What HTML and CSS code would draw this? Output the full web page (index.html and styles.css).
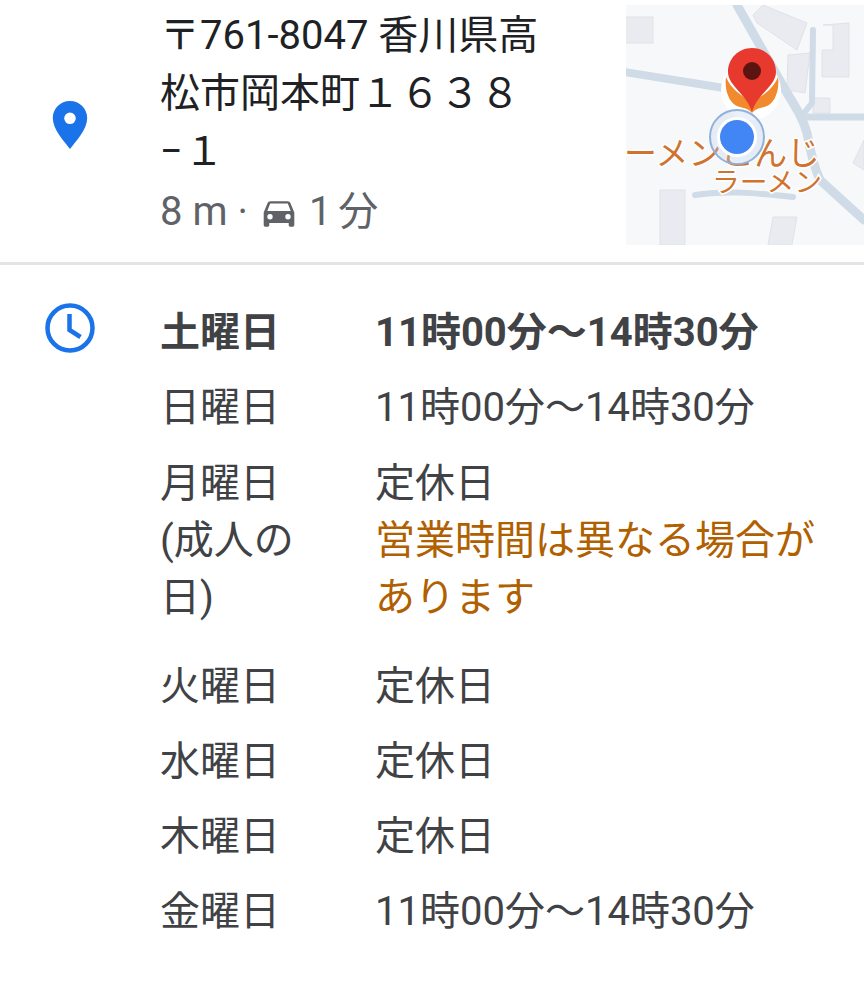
FILE: index.html
```html
<!DOCTYPE html>
<html lang="ja">
<head>
<meta charset="utf-8">
<title>店舗情報</title>
<link rel="stylesheet" href="styles.css">
</head>
<body>
<section class="place">
  <div class="icon-col">
    <svg class="pin" viewBox="0 0 36 50"><path fill="#1a73e8" fill-rule="evenodd" d="M18 1C8.300 1 .8 8.600.8 18c0 11.500 11.500 23.500 17.200 31 5.700-7.500 17.200-19.500 17.200-31C35.200 8.600 27.700 1 18 1zm0 11.500a5.800 5.800 0 1 1 0 11.600 5.800 5.800 0 0 1 0-11.600z"/></svg>
  </div>
  <div class="address">
    <div class="address-text">〒761-8047 香川県高<br>松市岡本町１６３８<br><span class="hyphen">−</span>１</div>
    <div class="distance"><span>8 m</span><span class="dot">·</span>
      <svg class="car" viewBox="0 0 32 26"><path fill="#5f6368" d="M27.500 2.300C27.100 1 25.900.2 24.500.2h-17C6.100.2 5 1 4.500 2.300L.7 11.500V24c0 1 .8 1.800 1.800 1.800h2c1 0 1.800-.8 1.800-1.800v-2h19.400v2c0 1 .8 1.800 1.800 1.800h2c1 0 1.800-.8 1.800-1.800V11.500L27.500 2.300zM7 18.500a2.700 2.700 0 1 1 0-5.400 2.700 2.700 0 0 1 0 5.400zm18 0a2.700 2.700 0 1 1 0-5.400 2.700 2.700 0 0 1 0 5.400zM4.300 10l2.900-7.500h17.600l2.900 7.500H4.300z"/></svg>
      <span class="drive">1 分</span></div>
  </div>
  <svg class="map" viewBox="0 0 238 240">
    <rect width="238" height="240" fill="#f7f8fa"/>
    <g fill="#e9ebf0" stroke="#dfe2e8" stroke-width="1">
      <rect x="-2" y="12" width="29" height="26"/>
      <path d="M127 10l10-10 44 18-10 27-40-27z"/>
      <path d="M197 20l26-2v54h-27V45h11V20z"/>
      <path d="M162 50l22-2-5 40-18-3z"/>
      <path d="M187 93h17v15h-17z"/>
      <rect x="34" y="185" width="25" height="55"/>
      <path d="M147 212l24 0-5 28h-24z"/>
      <path d="M238 135l-11 23 11 7z"/>
    </g>
    <g fill="none" stroke="#cfdbe6" stroke-linecap="round">
      <path stroke-width="9" d="M111 0l50 88c10 16 16 26 20 40 3 17 7 34 13 47l44 40"/>
      <path stroke-width="8" d="M-2 67l100 16"/>
      <path stroke-width="6" d="M187 25l-1 73-8 10"/>
      <path stroke-width="7" d="M182 112h58"/>
      <path stroke-width="6" d="M69 190c30-5 60-2 98 2"/>
    </g>
    <text class="map-label-a" x="-2" y="160" textLength="196" lengthAdjust="spacingAndGlyphs">ーメンこんじ</text>
    <text class="map-label-b" x="86" y="187" textLength="110" lengthAdjust="spacingAndGlyphs">ラーメン</text>
    <circle cx="125" cy="85" r="30" fill="#fff"/>
    <path fill="#f08a2c" d="M100 72c-2 14 4 28 14 30 5 1 10 3 12 6 2-3 7-5 12-6 10-2 16-16 14-30-5 12-16 20-26 24-10-4-21-12-26-24z"/>
    <path fill="#e8392f" d="M126 43c-14 0-24 11-24 24 0 14 19 22 24 40 5-18 24-26 24-40 0-13-10-24-24-24z"/>
    <circle cx="126" cy="66" r="9" fill="#5c1410"/>
    <circle cx="111" cy="132" r="27" fill="#bcd2ee" fill-opacity=".3" stroke="#8fb1dc" stroke-width="2"/>
    <circle cx="111" cy="132" r="20" fill="#fff"/>
    <circle cx="111" cy="132" r="17" fill="#4285f4"/>
  </svg>
</section>
<hr class="divider">
<section class="hours">
  <svg class="clock" viewBox="0 0 50 50"><circle cx="25" cy="25" r="22.500" fill="none" stroke="#1a73e8" stroke-width="4.500"/><path fill="none" stroke="#1a73e8" stroke-width="4.500" d="M24.500 11v16l11 7"/></svg>
  <div class="table">
    <div class="row today"><div>土曜日</div><div>11時00分～14時30分</div></div>
    <div class="row"><div>日曜日</div><div>11時00分～14時30分</div></div>
    <div class="row multi"><div>月曜日<br>(成人の<br>日)</div><div>定休日<div class="warn">営業時間は異なる場合が<br>あります</div></div></div>
    <div class="row"><div>火曜日</div><div>定休日</div></div>
    <div class="row"><div>水曜日</div><div>定休日</div></div>
    <div class="row"><div>木曜日</div><div>定休日</div></div>
    <div class="row"><div>金曜日</div><div>11時00分～14時30分</div></div>
  </div>
</section>
</body>
</html>
```
FILE: styles.css
```css
* { box-sizing: border-box; }
html, body { margin: 0; background: #fff; }
body {
  width: 864px;
  height: 986px;
  overflow: hidden;
  font-family: Roboto, "Noto Sans CJK JP", sans-serif;
  color: #404245;
}
.place { display: flex; height: 262px; padding-top: 5px; }
.icon-col { width: 160px; padding: 95px 0 0 52px; flex: none; }
.pin { display: block; width: 36px; height: 50px; }
.address { flex: 1; font-size: 40px; line-height: 58px; margin-top: 2px; }
.address-text { color: #202124; }
.hyphen { display: inline-block; width: 24px; }
.distance { color: #5f6368; display: flex; align-items: center; gap: 10px; margin-top: 2px; }
.car { width: 32px; height: 26px; margin: 4px 0 0 5px; }
.drive { margin-left: 4px; word-spacing: -3px; }
.map { width: 238px; height: 240px; flex: none; display: block; }
.map-label-a, .map-label-b {
  font-family: "Noto Sans CJK JP", sans-serif;
  fill: #cf7430;
  stroke: #fff;
  stroke-width: 3px;
  paint-order: stroke;
}
.map-label-a { font-size: 33px; }
.map-label-b { font-size: 27px; }
.divider { margin: 0; border: 0; height: 3px; background: #e3e4e6; }
.hours { display: flex; padding: 38px 0 0 45px; }
.clock { width: 50px; height: 50px; flex: none; }
.table { margin-left: 65px; flex: 1; font-size: 40px; line-height: 57px; margin-top: 1px; }
.row { display: grid; grid-template-columns: 215px 1fr; padding-bottom: 18.250px; }
.multi { padding-bottom: 32px; }
.today { font-weight: 700; }
.warn { color: #b06000; }
```
